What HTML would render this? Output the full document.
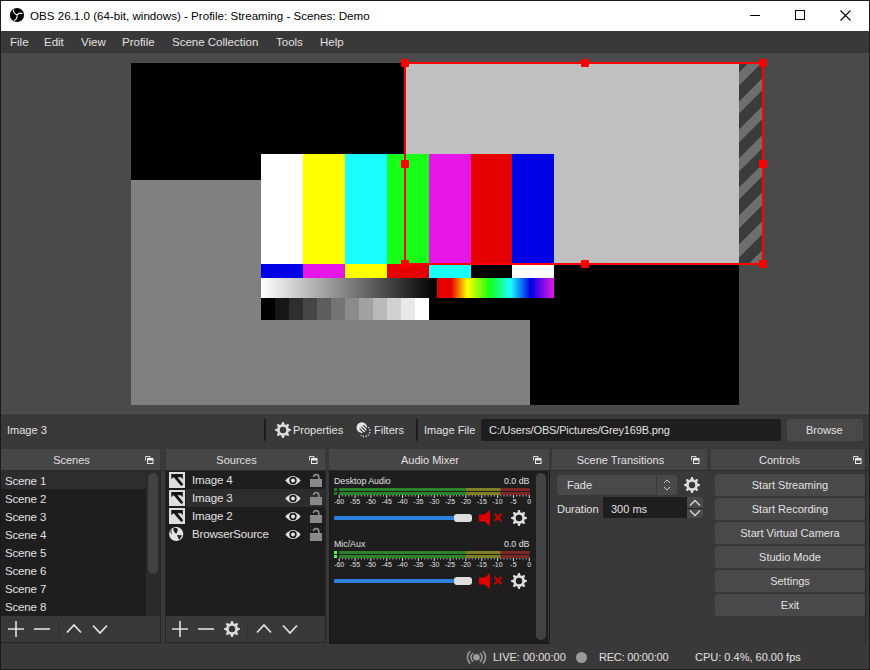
<!DOCTYPE html>
<html><head><meta charset="utf-8">
<style>
*{margin:0;padding:0;box-sizing:border-box}
html,body{width:870px;height:670px;overflow:hidden}
body{position:relative;-webkit-font-smoothing:antialiased;background:#1a1a1a;font-family:"Liberation Sans",sans-serif;font-size:11px;color:#e1e0e1}
.a{position:absolute}
.t{position:absolute;white-space:nowrap;line-height:1}
#title{left:1px;top:1px;width:868px;height:30px;background:#fff}
#menu{left:1px;top:31px;width:868px;height:22px;background:#3a393a}
#preview{left:1px;top:53px;width:868px;height:360px;background:#4a4a4a}
#ctx{left:1px;top:414px;width:868px;height:34px;background:#3a393a}
#docks{left:1px;top:448px;width:868px;height:195px;background:#3a393a}
#status{left:1px;top:643px;width:868px;height:26px;background:#3a393a}
.dtitle{position:absolute;top:449px;height:21px;background:#474647;line-height:21px;font-size:11px;color:#e1e0e1}
.dtitle span{position:absolute;left:0;right:18px;text-align:center;top:1px}
.list{position:absolute;background:#1f1e1f}
.btn{position:absolute;left:715px;width:150px;height:22px;background:#4a494a;border-radius:3px;text-align:center;line-height:22px;font-size:11px;color:#e1e0e1}
.h{position:absolute;width:8px;height:8px;background:#f00;border-radius:1px}
.li{position:absolute;white-space:nowrap;line-height:1;font-size:11.5px;letter-spacing:-0.15px}
</style></head><body>

<div id="title" class="a"></div>
<!-- OBS logo -->
<svg class="a" style="left:9px;top:7px" width="16" height="16" viewBox="0 0 16 16">
<circle cx="8" cy="8" r="7.1" fill="#000"/>
<path d="M4.3 3.0 Q4.6 6.6 8 7.8 M13.2 6.4 Q10.2 5.4 8 7.8 M8 7.8 Q8.8 11.2 5.4 13.4" stroke="#fff" stroke-width="1.1" fill="none" stroke-linecap="round"/>
</svg>
<div class="t" style="left:30px;top:10px;font-size:11.6px;color:#000">OBS 26.1.0 (64-bit, windows) - Profile: Streaming - Scenes: Demo</div>
<div class="a" style="left:750px;top:15px;width:10px;height:1px;background:#000"></div>
<div class="a" style="left:795px;top:10px;width:10px;height:10px;border:1px solid #000"></div>
<svg class="a" style="left:840px;top:10px" width="11" height="11" viewBox="0 0 11 11"><path d="M0.5 0.5L10.5 10.5M10.5 0.5L0.5 10.5" stroke="#000" stroke-width="1.1"/></svg>

<div id="menu" class="a"></div>
<div class="t" style="left:10px;top:37px;font-size:11.5px">File</div>
<div class="t" style="left:44px;top:37px;font-size:11.5px">Edit</div>
<div class="t" style="left:81px;top:37px;font-size:11.5px">View</div>
<div class="t" style="left:122px;top:37px;font-size:11.5px">Profile</div>
<div class="t" style="left:172px;top:37px;font-size:11.5px">Scene Collection</div>
<div class="t" style="left:276px;top:37px;font-size:11.5px">Tools</div>
<div class="t" style="left:320px;top:37px;font-size:11.5px">Help</div>

<div id="preview" class="a"></div>
<div class="a" style="left:131px;top:63px;width:608px;height:342px;background:#000"></div>
<div class="a" style="left:131px;top:180px;width:399px;height:225px;background:#808080"></div>
<div class="a" style="left:406px;top:64px;width:333px;height:199px;background:#c0c0c0"></div>
<div class="a" style="left:739px;top:64px;width:23px;height:199px;background:repeating-linear-gradient(-45deg,#6e6e6e 0px,#6e6e6e 9px,#3b3b3b 9px,#3b3b3b 20.3px)"></div>
<div class="a" style="left:261px;top:154px;width:293px;height:166px;background:#000">
  <div class="a" style="left:0;top:0;width:42px;height:110px;background:#fff"></div>
  <div class="a" style="left:42px;top:0;width:42px;height:110px;background:#ffff00"></div>
  <div class="a" style="left:84px;top:0;width:42px;height:110px;background:#19ffff"></div>
  <div class="a" style="left:126px;top:0;width:42px;height:110px;background:#16ff16"></div>
  <div class="a" style="left:168px;top:0;width:42px;height:110px;background:#e716e7"></div>
  <div class="a" style="left:210px;top:0;width:41px;height:110px;background:#e60000"></div>
  <div class="a" style="left:251px;top:0;width:42px;height:110px;background:#0000e6"></div>
  <div class="a" style="left:0;top:110px;width:42px;height:14px;background:#0000e6"></div>
  <div class="a" style="left:42px;top:110px;width:42px;height:14px;background:#e716e7"></div>
  <div class="a" style="left:84px;top:110px;width:42px;height:14px;background:#ffff00"></div>
  <div class="a" style="left:126px;top:110px;width:42px;height:14px;background:#e60000"></div>
  <div class="a" style="left:168px;top:110px;width:42px;height:14px;background:#19ffff"></div>
  <div class="a" style="left:210px;top:110px;width:41px;height:14px;background:#000"></div>
  <div class="a" style="left:251px;top:110px;width:42px;height:14px;background:#fff"></div>
  <div class="a" style="left:0;top:124px;width:175px;height:20px;background:linear-gradient(90deg,#fff,#000)"></div>
  <div class="a" style="left:176px;top:124px;width:117px;height:20px;background:linear-gradient(90deg,#e60000 0%,#e60000 12%,#ffff00 26%,#16ff16 45%,#19ffff 63%,#0000e6 80%,#e716e7 100%)"></div>
  <div class="a" style="left:0;top:144px;width:168px;height:22px;background:linear-gradient(90deg,#000 0 14px,#171717 14px 28px,#2e2e2e 28px 42px,#464646 42px 56px,#5d5d5d 56px 70px,#747474 70px 84px,#8b8b8b 84px 98px,#a2a2a2 98px 112px,#b9b9b9 112px 126px,#d1d1d1 126px 140px,#e8e8e8 140px 154px,#fff 154px 168px)"></div>
</div>
<div class="a" style="left:404px;top:62px;width:360px;height:203px;border:2px solid #f00"></div>
<div class="h" style="left:401px;top:59px"></div>
<div class="h" style="left:581px;top:59px"></div>
<div class="h" style="left:759px;top:59px"></div>
<div class="h" style="left:401px;top:160px"></div>
<div class="h" style="left:759px;top:160px"></div>
<div class="h" style="left:401px;top:260px"></div>
<div class="h" style="left:581px;top:260px"></div>
<div class="h" style="left:759px;top:260px"></div>

<!-- context bar -->
<div id="ctx" class="a"></div>
<div class="a" style="left:1px;top:413px;width:868px;height:1px;background:#525252"></div>
<div class="t" style="left:7px;top:425px">Image 3</div>
<div class="a" style="left:264px;top:419px;width:2px;height:22px;background:#1f1e1f"></div>
<svg class="a" style="left:275.0px;top:422.0px" width="16" height="16" viewBox="0 0 16 16"><path fill="#dcdcdc" fill-rule="evenodd" d="M13.72 6.48 L15.96 7.18 L15.96 8.82 L13.72 9.52 L13.12 10.97 L14.20 13.05 L13.05 14.20 L10.97 13.12 L9.52 13.72 L8.82 15.96 L7.18 15.96 L6.48 13.72 L5.03 13.12 L2.95 14.20 L1.80 13.05 L2.88 10.97 L2.28 9.52 L0.04 8.82 L0.04 7.18 L2.28 6.48 L2.88 5.03 L1.80 2.95 L2.95 1.80 L5.03 2.88 L6.48 2.28 L7.18 0.04 L8.82 0.04 L9.52 2.28 L10.97 2.88 L13.05 1.80 L14.20 2.95 L13.12 5.03Z M11.20 8.00 A3.2 3.2 0 1 0 4.80 8.00 A3.2 3.2 0 1 0 11.20 8.00Z"/></svg>
<div class="t" style="left:293px;top:425px">Properties</div>
<svg class="a" style="left:356px;top:422px" width="16" height="16" viewBox="0 0 16 16"><circle cx="5.8" cy="5.6" r="5.3" fill="#e6e6e6"/><path d="M7.2 3.2 L11.5 7.5 M5.4 4.9 L9.8 9.3 M3.6 6.6 L8 11" stroke="#3a393a" stroke-width="1.1"/><path d="M12.3 5.2 A5.2 5.2 0 1 1 4.8 13" fill="none" stroke="#d8d8d8" stroke-width="1.5" stroke-dasharray="1.3 1.3"/></svg>
<div class="t" style="left:374px;top:425px">Filters</div>
<div class="a" style="left:416px;top:419px;width:2px;height:22px;background:#1f1e1f"></div>
<div class="t" style="left:424px;top:425px">Image File</div>
<div class="a" style="left:481px;top:419px;width:300px;height:22px;background:#1f1e1f;border-radius:2px"></div>
<div class="t" style="left:489px;top:425px;letter-spacing:-0.15px">C:/Users/OBS/Pictures/Grey169B.png</div>
<div class="a" style="left:787px;top:419px;width:76px;height:22px;background:#4a494a;border-radius:3px"></div>
<div class="t" style="left:806px;top:425px">Browse</div>

<div id="docks" class="a"></div>
<div class="a" style="left:1px;top:470px;width:868px;height:1px;background:#2a2a2a"></div>
<div class="dtitle" style="left:1px;width:159px"><span>Scenes</span></div>
<div class="dtitle" style="left:166px;width:159px"><span>Sources</span></div>
<div class="dtitle" style="left:329px;width:220px"><span>Audio Mixer</span></div>
<div class="dtitle" style="left:552px;width:155px"><span>Scene Transitions</span></div>
<div class="dtitle" style="left:711px;width:155px"><span>Controls</span></div>
<svg class="a" style="left:145.0px;top:456px" width="9" height="8" viewBox="0 0 9 8"><path d="M0.5 4.5V0.5H5V2" fill="none" stroke="#d8d8d8" stroke-width="1"/><rect x="2.5" y="2.5" width="5.5" height="5" fill="none" stroke="#e8e8e8" stroke-width="1"/><rect x="2.5" y="2.5" width="5.5" height="2" fill="#e8e8e8"/></svg>
<svg class="a" style="left:309.0px;top:456px" width="9" height="8" viewBox="0 0 9 8"><path d="M0.5 4.5V0.5H5V2" fill="none" stroke="#d8d8d8" stroke-width="1"/><rect x="2.5" y="2.5" width="5.5" height="5" fill="none" stroke="#e8e8e8" stroke-width="1"/><rect x="2.5" y="2.5" width="5.5" height="2" fill="#e8e8e8"/></svg>
<svg class="a" style="left:533.0px;top:456px" width="9" height="8" viewBox="0 0 9 8"><path d="M0.5 4.5V0.5H5V2" fill="none" stroke="#d8d8d8" stroke-width="1"/><rect x="2.5" y="2.5" width="5.5" height="5" fill="none" stroke="#e8e8e8" stroke-width="1"/><rect x="2.5" y="2.5" width="5.5" height="2" fill="#e8e8e8"/></svg>
<svg class="a" style="left:691.0px;top:456px" width="9" height="8" viewBox="0 0 9 8"><path d="M0.5 4.5V0.5H5V2" fill="none" stroke="#d8d8d8" stroke-width="1"/><rect x="2.5" y="2.5" width="5.5" height="5" fill="none" stroke="#e8e8e8" stroke-width="1"/><rect x="2.5" y="2.5" width="5.5" height="2" fill="#e8e8e8"/></svg>
<svg class="a" style="left:853.0px;top:456px" width="9" height="8" viewBox="0 0 9 8"><path d="M0.5 4.5V0.5H5V2" fill="none" stroke="#d8d8d8" stroke-width="1"/><rect x="2.5" y="2.5" width="5.5" height="5" fill="none" stroke="#e8e8e8" stroke-width="1"/><rect x="2.5" y="2.5" width="5.5" height="2" fill="#e8e8e8"/></svg>

<!-- Scenes -->
<div class="list" style="left:1px;top:471px;width:159px;height:145px"></div>
<div class="a" style="left:1px;top:471px;width:145px;height:18px;background:#2e2d2e"></div>
<div class="a" style="left:146px;top:471px;width:14px;height:145px;background:#2c2b2c"></div>
<div class="a" style="left:148px;top:473px;width:10px;height:101px;background:#434243;border-radius:5px"></div>
<div class="li" style="left:5px;top:476px">Scene 1</div>
<div class="li" style="left:5px;top:494px">Scene 2</div>
<div class="li" style="left:5px;top:512px">Scene 3</div>
<div class="li" style="left:5px;top:530px">Scene 4</div>
<div class="li" style="left:5px;top:548px">Scene 5</div>
<div class="li" style="left:5px;top:566px">Scene 6</div>
<div class="li" style="left:5px;top:584px">Scene 7</div>
<div class="li" style="left:5px;top:602px">Scene 8</div>
<svg class="a" style="left:8.0px;top:621px" width="16" height="16" viewBox="0 0 16 16"><path d="M8 0V16M0 8H16" stroke="#e0e0e0" stroke-width="1.6"/></svg>
<svg class="a" style="left:34.0px;top:621px" width="16" height="16" viewBox="0 0 16 16"><path d="M0 8H16" stroke="#e0e0e0" stroke-width="1.6"/></svg>
<svg class="a" style="left:66.0px;top:621px" width="16" height="16" viewBox="0 0 16 16"><path d="M1 11.5L8 4L15 11.5" fill="none" stroke="#e0e0e0" stroke-width="1.8"/></svg>
<svg class="a" style="left:92.0px;top:621px" width="16" height="16" viewBox="0 0 16 16"><path d="M1 4.5L8 12L15 4.5" fill="none" stroke="#e0e0e0" stroke-width="1.8"/></svg>
<div class="a" style="left:58px;top:620px;width:1px;height:18px;background:#333233"></div>

<!-- Sources -->
<div class="list" style="left:166px;top:471px;width:159px;height:145px"></div>
<div class="a" style="left:186px;top:489px;width:139px;height:18px;background:#2e2d2e"></div>
<svg class="a" style="left:169.0px;top:472.0px" width="16" height="16" viewBox="0 0 16 16"><rect width="16" height="16" fill="#dedede"/><path d="M2.3 2H13.8V7.3L12 5.3H4.3L2.3 7.3Z" fill="#141414"/><path d="M6 4.5L12.6 12.3" stroke="#141414" stroke-width="2.8" stroke-linecap="round"/></svg>
<svg class="a" style="left:169.0px;top:490.0px" width="16" height="16" viewBox="0 0 16 16"><rect width="16" height="16" fill="#dedede"/><path d="M2.3 2H13.8V7.3L12 5.3H4.3L2.3 7.3Z" fill="#141414"/><path d="M6 4.5L12.6 12.3" stroke="#141414" stroke-width="2.8" stroke-linecap="round"/></svg>
<svg class="a" style="left:169.0px;top:508.0px" width="16" height="16" viewBox="0 0 16 16"><rect width="16" height="16" fill="#dedede"/><path d="M2.3 2H13.8V7.3L12 5.3H4.3L2.3 7.3Z" fill="#141414"/><path d="M6 4.5L12.6 12.3" stroke="#141414" stroke-width="2.8" stroke-linecap="round"/></svg>
<svg class="a" style="left:169.0px;top:527.0px" width="15" height="15" viewBox="0 0 15 15"><circle cx="7.2" cy="7" r="7.1" fill="#e2e2e2"/><path d="M4.6 0.4 C6 0.6 8.4 0.9 8.8 2.4 C9 3.8 7.8 5 7.4 6.8 C6.2 6.2 5.2 4.8 4.4 3.2 Z M8 7.9 L12.9 8.3 C12.5 10 11.2 11.6 9.9 12.7 C9.6 11 8.6 9.6 8 7.9Z" fill="#1f1e1f"/><path d="M2.6 2.6 C1.6 4 1.7 5.6 2.6 6.8" stroke="#1f1e1f" stroke-width="0.9" fill="none"/></svg>
<svg class="a" style="left:285.0px;top:475.0px" width="16" height="11" viewBox="0 0 16 11"><path d="M0.3 5.5 Q8 -3.5 15.7 5.5 Q8 14.5 0.3 5.5Z" fill="#e4e4e4"/><circle cx="8" cy="5.5" r="3.7" fill="#1f1e1f"/><circle cx="8" cy="5.5" r="2.0" fill="#e4e4e4"/></svg>
<svg class="a" style="left:285.0px;top:493.0px" width="16" height="11" viewBox="0 0 16 11"><path d="M0.3 5.5 Q8 -3.5 15.7 5.5 Q8 14.5 0.3 5.5Z" fill="#e4e4e4"/><circle cx="8" cy="5.5" r="3.7" fill="#1f1e1f"/><circle cx="8" cy="5.5" r="2.0" fill="#e4e4e4"/></svg>
<svg class="a" style="left:285.0px;top:511.0px" width="16" height="11" viewBox="0 0 16 11"><path d="M0.3 5.5 Q8 -3.5 15.7 5.5 Q8 14.5 0.3 5.5Z" fill="#e4e4e4"/><circle cx="8" cy="5.5" r="3.7" fill="#1f1e1f"/><circle cx="8" cy="5.5" r="2.0" fill="#e4e4e4"/></svg>
<svg class="a" style="left:285.0px;top:529.0px" width="16" height="11" viewBox="0 0 16 11"><path d="M0.3 5.5 Q8 -3.5 15.7 5.5 Q8 14.5 0.3 5.5Z" fill="#e4e4e4"/><circle cx="8" cy="5.5" r="3.7" fill="#1f1e1f"/><circle cx="8" cy="5.5" r="2.0" fill="#e4e4e4"/></svg>
<svg class="a" style="left:309.0px;top:473.0px" width="14" height="15" viewBox="0 0 14 15"><path d="M4.5 4 C4.5 1 9.5 0.5 9.8 4 V6.5" fill="none" stroke="#8a8a8a" stroke-width="1.7"/><rect x="1" y="6" width="12" height="8" fill="#8a8a8a"/></svg>
<svg class="a" style="left:309.0px;top:491.0px" width="14" height="15" viewBox="0 0 14 15"><path d="M4.5 4 C4.5 1 9.5 0.5 9.8 4 V6.5" fill="none" stroke="#8a8a8a" stroke-width="1.7"/><rect x="1" y="6" width="12" height="8" fill="#8a8a8a"/></svg>
<svg class="a" style="left:309.0px;top:509.0px" width="14" height="15" viewBox="0 0 14 15"><path d="M4.5 4 C4.5 1 9.5 0.5 9.8 4 V6.5" fill="none" stroke="#8a8a8a" stroke-width="1.7"/><rect x="1" y="6" width="12" height="8" fill="#8a8a8a"/></svg>
<svg class="a" style="left:309.0px;top:527.0px" width="14" height="15" viewBox="0 0 14 15"><path d="M4.5 4 C4.5 1 9.5 0.5 9.8 4 V6.5" fill="none" stroke="#8a8a8a" stroke-width="1.7"/><rect x="1" y="6" width="12" height="8" fill="#8a8a8a"/></svg>
<div class="li" style="left:192px;top:475px">Image 4</div>
<div class="li" style="left:192px;top:493px">Image 3</div>
<div class="li" style="left:192px;top:511px">Image 2</div>
<div class="li" style="left:192px;top:529px">BrowserSource</div>
<svg class="a" style="left:172.0px;top:621px" width="16" height="16" viewBox="0 0 16 16"><path d="M8 0V16M0 8H16" stroke="#e0e0e0" stroke-width="1.6"/></svg>
<svg class="a" style="left:198.0px;top:621px" width="16" height="16" viewBox="0 0 16 16"><path d="M0 8H16" stroke="#e0e0e0" stroke-width="1.6"/></svg>
<svg class="a" style="left:224.0px;top:621.0px" width="16" height="16" viewBox="0 0 16 16"><path fill="#dcdcdc" fill-rule="evenodd" d="M13.72 6.48 L15.96 7.18 L15.96 8.82 L13.72 9.52 L13.12 10.97 L14.20 13.05 L13.05 14.20 L10.97 13.12 L9.52 13.72 L8.82 15.96 L7.18 15.96 L6.48 13.72 L5.03 13.12 L2.95 14.20 L1.80 13.05 L2.88 10.97 L2.28 9.52 L0.04 8.82 L0.04 7.18 L2.28 6.48 L2.88 5.03 L1.80 2.95 L2.95 1.80 L5.03 2.88 L6.48 2.28 L7.18 0.04 L8.82 0.04 L9.52 2.28 L10.97 2.88 L13.05 1.80 L14.20 2.95 L13.12 5.03Z M11.20 8.00 A3.2 3.2 0 1 0 4.80 8.00 A3.2 3.2 0 1 0 11.20 8.00Z"/></svg>
<div class="a" style="left:247px;top:620px;width:1px;height:18px;background:#333233"></div>
<svg class="a" style="left:256.0px;top:621px" width="16" height="16" viewBox="0 0 16 16"><path d="M1 11.5L8 4L15 11.5" fill="none" stroke="#e0e0e0" stroke-width="1.8"/></svg>
<svg class="a" style="left:282.0px;top:621px" width="16" height="16" viewBox="0 0 16 16"><path d="M1 4.5L8 12L15 4.5" fill="none" stroke="#e0e0e0" stroke-width="1.8"/></svg>

<!-- Audio Mixer -->
<div class="list" style="left:330px;top:471px;width:218px;height:172px"></div>
<div class="a" style="left:536px;top:473px;width:10px;height:167px;background:#434243;border-radius:5px"></div>
<div class="t" style="left:334px;top:477px;font-size:8.8px">Desktop Audio</div>
<div class="t" style="left:504px;top:477px;font-size:8.8px">0.0 dB</div>
<svg class="a" style="left:0px;top:486px" width="560" height="20" viewBox="0 486 560 20">
<rect x="334" y="488" width="3" height="3" fill="#267f26"/>
<rect x="339.20" y="488" width="126.72" height="3" fill="#2b832b"/>
<rect x="465.92" y="488" width="34.85" height="3" fill="#7f7f26"/>
<rect x="500.77" y="488" width="29.01" height="3" fill="#7f2626"/>
<rect x="334" y="492" width="3" height="3" fill="#267f26"/>
<rect x="339.20" y="492" width="126.72" height="3" fill="#2b832b"/>
<rect x="465.92" y="492" width="34.85" height="3" fill="#7f7f26"/>
<rect x="500.77" y="492" width="29.01" height="3" fill="#7f2626"/>
<rect x="338.70" y="495" width="1" height="3" fill="#e0e0e0"/>
<rect x="341.87" y="495" width="1" height="1.5" fill="#b0b0b0"/>
<rect x="345.04" y="495" width="1" height="1.5" fill="#b0b0b0"/>
<rect x="348.20" y="495" width="1" height="1.5" fill="#b0b0b0"/>
<rect x="351.37" y="495" width="1" height="1.5" fill="#b0b0b0"/>
<rect x="354.54" y="495" width="1" height="3" fill="#e0e0e0"/>
<rect x="357.71" y="495" width="1" height="1.5" fill="#b0b0b0"/>
<rect x="360.88" y="495" width="1" height="1.5" fill="#b0b0b0"/>
<rect x="364.04" y="495" width="1" height="1.5" fill="#b0b0b0"/>
<rect x="367.21" y="495" width="1" height="1.5" fill="#b0b0b0"/>
<rect x="370.38" y="495" width="1" height="3" fill="#e0e0e0"/>
<rect x="373.55" y="495" width="1" height="1.5" fill="#b0b0b0"/>
<rect x="376.72" y="495" width="1" height="1.5" fill="#b0b0b0"/>
<rect x="379.88" y="495" width="1" height="1.5" fill="#b0b0b0"/>
<rect x="383.05" y="495" width="1" height="1.5" fill="#b0b0b0"/>
<rect x="386.22" y="495" width="1" height="3" fill="#e0e0e0"/>
<rect x="389.39" y="495" width="1" height="1.5" fill="#b0b0b0"/>
<rect x="392.56" y="495" width="1" height="1.5" fill="#b0b0b0"/>
<rect x="395.72" y="495" width="1" height="1.5" fill="#b0b0b0"/>
<rect x="398.89" y="495" width="1" height="1.5" fill="#b0b0b0"/>
<rect x="402.06" y="495" width="1" height="3" fill="#e0e0e0"/>
<rect x="405.23" y="495" width="1" height="1.5" fill="#b0b0b0"/>
<rect x="408.40" y="495" width="1" height="1.5" fill="#b0b0b0"/>
<rect x="411.56" y="495" width="1" height="1.5" fill="#b0b0b0"/>
<rect x="414.73" y="495" width="1" height="1.5" fill="#b0b0b0"/>
<rect x="417.90" y="495" width="1" height="3" fill="#e0e0e0"/>
<rect x="421.07" y="495" width="1" height="1.5" fill="#b0b0b0"/>
<rect x="424.24" y="495" width="1" height="1.5" fill="#b0b0b0"/>
<rect x="427.40" y="495" width="1" height="1.5" fill="#b0b0b0"/>
<rect x="430.57" y="495" width="1" height="1.5" fill="#b0b0b0"/>
<rect x="433.74" y="495" width="1" height="3" fill="#e0e0e0"/>
<rect x="436.91" y="495" width="1" height="1.5" fill="#b0b0b0"/>
<rect x="440.08" y="495" width="1" height="1.5" fill="#b0b0b0"/>
<rect x="443.24" y="495" width="1" height="1.5" fill="#b0b0b0"/>
<rect x="446.41" y="495" width="1" height="1.5" fill="#b0b0b0"/>
<rect x="449.58" y="495" width="1" height="3" fill="#e0e0e0"/>
<rect x="452.75" y="495" width="1" height="1.5" fill="#b0b0b0"/>
<rect x="455.92" y="495" width="1" height="1.5" fill="#b0b0b0"/>
<rect x="459.08" y="495" width="1" height="1.5" fill="#b0b0b0"/>
<rect x="462.25" y="495" width="1" height="1.5" fill="#b0b0b0"/>
<rect x="465.42" y="495" width="1" height="3" fill="#e0e0e0"/>
<rect x="468.59" y="495" width="1" height="1.5" fill="#b0b0b0"/>
<rect x="471.76" y="495" width="1" height="1.5" fill="#b0b0b0"/>
<rect x="474.92" y="495" width="1" height="1.5" fill="#b0b0b0"/>
<rect x="478.09" y="495" width="1" height="1.5" fill="#b0b0b0"/>
<rect x="481.26" y="495" width="1" height="3" fill="#e0e0e0"/>
<rect x="484.43" y="495" width="1" height="1.5" fill="#b0b0b0"/>
<rect x="487.60" y="495" width="1" height="1.5" fill="#b0b0b0"/>
<rect x="490.76" y="495" width="1" height="1.5" fill="#b0b0b0"/>
<rect x="493.93" y="495" width="1" height="1.5" fill="#b0b0b0"/>
<rect x="497.10" y="495" width="1" height="3" fill="#e0e0e0"/>
<rect x="500.27" y="495" width="1" height="1.5" fill="#b0b0b0"/>
<rect x="503.44" y="495" width="1" height="1.5" fill="#b0b0b0"/>
<rect x="506.60" y="495" width="1" height="1.5" fill="#b0b0b0"/>
<rect x="509.77" y="495" width="1" height="1.5" fill="#b0b0b0"/>
<rect x="512.94" y="495" width="1" height="3" fill="#e0e0e0"/>
<rect x="516.11" y="495" width="1" height="1.5" fill="#b0b0b0"/>
<rect x="519.28" y="495" width="1" height="1.5" fill="#b0b0b0"/>
<rect x="522.44" y="495" width="1" height="1.5" fill="#b0b0b0"/>
<rect x="525.61" y="495" width="1" height="1.5" fill="#b0b0b0"/>
<rect x="528.78" y="495" width="1" height="3" fill="#e0e0e0"/>
<text x="339.20" y="504" font-family="Liberation Sans" font-size="7" fill="#e0e0e0" text-anchor="middle">-60</text>
<text x="355.04" y="504" font-family="Liberation Sans" font-size="7" fill="#e0e0e0" text-anchor="middle">-55</text>
<text x="370.88" y="504" font-family="Liberation Sans" font-size="7" fill="#e0e0e0" text-anchor="middle">-50</text>
<text x="386.72" y="504" font-family="Liberation Sans" font-size="7" fill="#e0e0e0" text-anchor="middle">-45</text>
<text x="402.56" y="504" font-family="Liberation Sans" font-size="7" fill="#e0e0e0" text-anchor="middle">-40</text>
<text x="418.40" y="504" font-family="Liberation Sans" font-size="7" fill="#e0e0e0" text-anchor="middle">-35</text>
<text x="434.24" y="504" font-family="Liberation Sans" font-size="7" fill="#e0e0e0" text-anchor="middle">-30</text>
<text x="450.08" y="504" font-family="Liberation Sans" font-size="7" fill="#e0e0e0" text-anchor="middle">-25</text>
<text x="465.92" y="504" font-family="Liberation Sans" font-size="7" fill="#e0e0e0" text-anchor="middle">-20</text>
<text x="481.76" y="504" font-family="Liberation Sans" font-size="7" fill="#e0e0e0" text-anchor="middle">-15</text>
<text x="497.60" y="504" font-family="Liberation Sans" font-size="7" fill="#e0e0e0" text-anchor="middle">-10</text>
<text x="513.44" y="504" font-family="Liberation Sans" font-size="7" fill="#e0e0e0" text-anchor="middle">-5</text>
<text x="529.28" y="504" font-family="Liberation Sans" font-size="7" fill="#e0e0e0" text-anchor="middle">0</text>
</svg>
<div class="a" style="left:334px;top:516px;width:122px;height:4px;background:#2a82da;border-radius:1px"></div>
<div class="a" style="left:454px;top:514px;width:18px;height:8px;background:#dedede;border-radius:3px"></div>
<svg class="a" style="left:478px;top:509px" width="26" height="18" viewBox="0 0 26 18"><path d="M1 5.5H6.5L12 1V17L6.5 12.5H1Z" fill="#e00000"/><path d="M16.5 5L23.5 12M23.5 5L16.5 12" stroke="#c80000" stroke-width="2.2"/></svg>
<svg class="a" style="left:511px;top:510px" width="16" height="16" viewBox="0 0 16 16"><path fill="#dcdcdc" fill-rule="evenodd" d="M13.72 6.48 L15.96 7.18 L15.96 8.82 L13.72 9.52 L13.12 10.97 L14.20 13.05 L13.05 14.20 L10.97 13.12 L9.52 13.72 L8.82 15.96 L7.18 15.96 L6.48 13.72 L5.03 13.12 L2.95 14.20 L1.80 13.05 L2.88 10.97 L2.28 9.52 L0.04 8.82 L0.04 7.18 L2.28 6.48 L2.88 5.03 L1.80 2.95 L2.95 1.80 L5.03 2.88 L6.48 2.28 L7.18 0.04 L8.82 0.04 L9.52 2.28 L10.97 2.88 L13.05 1.80 L14.20 2.95 L13.12 5.03Z M11.20 8.00 A3.2 3.2 0 1 0 4.80 8.00 A3.2 3.2 0 1 0 11.20 8.00Z"/></svg>
<div class="t" style="left:334px;top:540px;font-size:8.8px">Mic/Aux</div>
<div class="t" style="left:504px;top:540px;font-size:8.8px">0.0 dB</div>
<svg class="a" style="left:0px;top:549px" width="560" height="20" viewBox="0 549 560 20">
<rect x="334" y="551" width="3" height="3" fill="#4cff4c"/>
<rect x="339.20" y="551" width="126.72" height="3" fill="#2b832b"/>
<rect x="465.92" y="551" width="34.85" height="3" fill="#7f7f26"/>
<rect x="500.77" y="551" width="29.01" height="3" fill="#7f2626"/>
<rect x="334" y="555" width="3" height="3" fill="#4cff4c"/>
<rect x="339.20" y="555" width="126.72" height="3" fill="#2b832b"/>
<rect x="465.92" y="555" width="34.85" height="3" fill="#7f7f26"/>
<rect x="500.77" y="555" width="29.01" height="3" fill="#7f2626"/>
<rect x="338.70" y="558" width="1" height="3" fill="#e0e0e0"/>
<rect x="341.87" y="558" width="1" height="1.5" fill="#b0b0b0"/>
<rect x="345.04" y="558" width="1" height="1.5" fill="#b0b0b0"/>
<rect x="348.20" y="558" width="1" height="1.5" fill="#b0b0b0"/>
<rect x="351.37" y="558" width="1" height="1.5" fill="#b0b0b0"/>
<rect x="354.54" y="558" width="1" height="3" fill="#e0e0e0"/>
<rect x="357.71" y="558" width="1" height="1.5" fill="#b0b0b0"/>
<rect x="360.88" y="558" width="1" height="1.5" fill="#b0b0b0"/>
<rect x="364.04" y="558" width="1" height="1.5" fill="#b0b0b0"/>
<rect x="367.21" y="558" width="1" height="1.5" fill="#b0b0b0"/>
<rect x="370.38" y="558" width="1" height="3" fill="#e0e0e0"/>
<rect x="373.55" y="558" width="1" height="1.5" fill="#b0b0b0"/>
<rect x="376.72" y="558" width="1" height="1.5" fill="#b0b0b0"/>
<rect x="379.88" y="558" width="1" height="1.5" fill="#b0b0b0"/>
<rect x="383.05" y="558" width="1" height="1.5" fill="#b0b0b0"/>
<rect x="386.22" y="558" width="1" height="3" fill="#e0e0e0"/>
<rect x="389.39" y="558" width="1" height="1.5" fill="#b0b0b0"/>
<rect x="392.56" y="558" width="1" height="1.5" fill="#b0b0b0"/>
<rect x="395.72" y="558" width="1" height="1.5" fill="#b0b0b0"/>
<rect x="398.89" y="558" width="1" height="1.5" fill="#b0b0b0"/>
<rect x="402.06" y="558" width="1" height="3" fill="#e0e0e0"/>
<rect x="405.23" y="558" width="1" height="1.5" fill="#b0b0b0"/>
<rect x="408.40" y="558" width="1" height="1.5" fill="#b0b0b0"/>
<rect x="411.56" y="558" width="1" height="1.5" fill="#b0b0b0"/>
<rect x="414.73" y="558" width="1" height="1.5" fill="#b0b0b0"/>
<rect x="417.90" y="558" width="1" height="3" fill="#e0e0e0"/>
<rect x="421.07" y="558" width="1" height="1.5" fill="#b0b0b0"/>
<rect x="424.24" y="558" width="1" height="1.5" fill="#b0b0b0"/>
<rect x="427.40" y="558" width="1" height="1.5" fill="#b0b0b0"/>
<rect x="430.57" y="558" width="1" height="1.5" fill="#b0b0b0"/>
<rect x="433.74" y="558" width="1" height="3" fill="#e0e0e0"/>
<rect x="436.91" y="558" width="1" height="1.5" fill="#b0b0b0"/>
<rect x="440.08" y="558" width="1" height="1.5" fill="#b0b0b0"/>
<rect x="443.24" y="558" width="1" height="1.5" fill="#b0b0b0"/>
<rect x="446.41" y="558" width="1" height="1.5" fill="#b0b0b0"/>
<rect x="449.58" y="558" width="1" height="3" fill="#e0e0e0"/>
<rect x="452.75" y="558" width="1" height="1.5" fill="#b0b0b0"/>
<rect x="455.92" y="558" width="1" height="1.5" fill="#b0b0b0"/>
<rect x="459.08" y="558" width="1" height="1.5" fill="#b0b0b0"/>
<rect x="462.25" y="558" width="1" height="1.5" fill="#b0b0b0"/>
<rect x="465.42" y="558" width="1" height="3" fill="#e0e0e0"/>
<rect x="468.59" y="558" width="1" height="1.5" fill="#b0b0b0"/>
<rect x="471.76" y="558" width="1" height="1.5" fill="#b0b0b0"/>
<rect x="474.92" y="558" width="1" height="1.5" fill="#b0b0b0"/>
<rect x="478.09" y="558" width="1" height="1.5" fill="#b0b0b0"/>
<rect x="481.26" y="558" width="1" height="3" fill="#e0e0e0"/>
<rect x="484.43" y="558" width="1" height="1.5" fill="#b0b0b0"/>
<rect x="487.60" y="558" width="1" height="1.5" fill="#b0b0b0"/>
<rect x="490.76" y="558" width="1" height="1.5" fill="#b0b0b0"/>
<rect x="493.93" y="558" width="1" height="1.5" fill="#b0b0b0"/>
<rect x="497.10" y="558" width="1" height="3" fill="#e0e0e0"/>
<rect x="500.27" y="558" width="1" height="1.5" fill="#b0b0b0"/>
<rect x="503.44" y="558" width="1" height="1.5" fill="#b0b0b0"/>
<rect x="506.60" y="558" width="1" height="1.5" fill="#b0b0b0"/>
<rect x="509.77" y="558" width="1" height="1.5" fill="#b0b0b0"/>
<rect x="512.94" y="558" width="1" height="3" fill="#e0e0e0"/>
<rect x="516.11" y="558" width="1" height="1.5" fill="#b0b0b0"/>
<rect x="519.28" y="558" width="1" height="1.5" fill="#b0b0b0"/>
<rect x="522.44" y="558" width="1" height="1.5" fill="#b0b0b0"/>
<rect x="525.61" y="558" width="1" height="1.5" fill="#b0b0b0"/>
<rect x="528.78" y="558" width="1" height="3" fill="#e0e0e0"/>
<text x="339.20" y="567" font-family="Liberation Sans" font-size="7" fill="#e0e0e0" text-anchor="middle">-60</text>
<text x="355.04" y="567" font-family="Liberation Sans" font-size="7" fill="#e0e0e0" text-anchor="middle">-55</text>
<text x="370.88" y="567" font-family="Liberation Sans" font-size="7" fill="#e0e0e0" text-anchor="middle">-50</text>
<text x="386.72" y="567" font-family="Liberation Sans" font-size="7" fill="#e0e0e0" text-anchor="middle">-45</text>
<text x="402.56" y="567" font-family="Liberation Sans" font-size="7" fill="#e0e0e0" text-anchor="middle">-40</text>
<text x="418.40" y="567" font-family="Liberation Sans" font-size="7" fill="#e0e0e0" text-anchor="middle">-35</text>
<text x="434.24" y="567" font-family="Liberation Sans" font-size="7" fill="#e0e0e0" text-anchor="middle">-30</text>
<text x="450.08" y="567" font-family="Liberation Sans" font-size="7" fill="#e0e0e0" text-anchor="middle">-25</text>
<text x="465.92" y="567" font-family="Liberation Sans" font-size="7" fill="#e0e0e0" text-anchor="middle">-20</text>
<text x="481.76" y="567" font-family="Liberation Sans" font-size="7" fill="#e0e0e0" text-anchor="middle">-15</text>
<text x="497.60" y="567" font-family="Liberation Sans" font-size="7" fill="#e0e0e0" text-anchor="middle">-10</text>
<text x="513.44" y="567" font-family="Liberation Sans" font-size="7" fill="#e0e0e0" text-anchor="middle">-5</text>
<text x="529.28" y="567" font-family="Liberation Sans" font-size="7" fill="#e0e0e0" text-anchor="middle">0</text>
</svg>
<div class="a" style="left:334px;top:579px;width:122px;height:4px;background:#2a82da;border-radius:1px"></div>
<div class="a" style="left:454px;top:577px;width:18px;height:8px;background:#dedede;border-radius:3px"></div>
<svg class="a" style="left:478px;top:572px" width="26" height="18" viewBox="0 0 26 18"><path d="M1 5.5H6.5L12 1V17L6.5 12.5H1Z" fill="#e00000"/><path d="M16.5 5L23.5 12M23.5 5L16.5 12" stroke="#c80000" stroke-width="2.2"/></svg>
<svg class="a" style="left:511px;top:573px" width="16" height="16" viewBox="0 0 16 16"><path fill="#dcdcdc" fill-rule="evenodd" d="M13.72 6.48 L15.96 7.18 L15.96 8.82 L13.72 9.52 L13.12 10.97 L14.20 13.05 L13.05 14.20 L10.97 13.12 L9.52 13.72 L8.82 15.96 L7.18 15.96 L6.48 13.72 L5.03 13.12 L2.95 14.20 L1.80 13.05 L2.88 10.97 L2.28 9.52 L0.04 8.82 L0.04 7.18 L2.28 6.48 L2.88 5.03 L1.80 2.95 L2.95 1.80 L5.03 2.88 L6.48 2.28 L7.18 0.04 L8.82 0.04 L9.52 2.28 L10.97 2.88 L13.05 1.80 L14.20 2.95 L13.12 5.03Z M11.20 8.00 A3.2 3.2 0 1 0 4.80 8.00 A3.2 3.2 0 1 0 11.20 8.00Z"/></svg>

<!-- Scene transitions -->
<div class="a" style="left:557px;top:475px;width:120px;height:20px;background:#4a494a;border-radius:3px"></div>
<div class="a" style="left:656px;top:476px;width:1px;height:18px;background:#3a393a"></div>
<svg class="a" style="left:662px;top:478px" width="10" height="14" viewBox="0 0 10 14"><path d="M2 5 L5 2 L8 5 M2 9 L5 12 L8 9" stroke="#c8c8c8" stroke-width="1" fill="none"/></svg>
<div class="t" style="left:567px;top:480px">Fade</div>
<svg class="a" style="left:684.0px;top:477.0px" width="16" height="16" viewBox="0 0 16 16"><path fill="#dcdcdc" fill-rule="evenodd" d="M13.72 6.48 L15.96 7.18 L15.96 8.82 L13.72 9.52 L13.12 10.97 L14.20 13.05 L13.05 14.20 L10.97 13.12 L9.52 13.72 L8.82 15.96 L7.18 15.96 L6.48 13.72 L5.03 13.12 L2.95 14.20 L1.80 13.05 L2.88 10.97 L2.28 9.52 L0.04 8.82 L0.04 7.18 L2.28 6.48 L2.88 5.03 L1.80 2.95 L2.95 1.80 L5.03 2.88 L6.48 2.28 L7.18 0.04 L8.82 0.04 L9.52 2.28 L10.97 2.88 L13.05 1.80 L14.20 2.95 L13.12 5.03Z M11.20 8.00 A3.2 3.2 0 1 0 4.80 8.00 A3.2 3.2 0 1 0 11.20 8.00Z"/></svg>
<div class="t" style="left:557px;top:504px">Duration</div>
<div class="a" style="left:603px;top:497px;width:84px;height:21px;background:#1f1e1f"></div>
<div class="a" style="left:687px;top:497px;width:16px;height:21px;background:#4a494a;border-radius:0 3px 3px 0"></div>
<svg class="a" style="left:687px;top:497px" width="16" height="21" viewBox="0 0 16 21"><path d="M3 8.5 L8 3.5 L13 8.5 M3 13.5 L8 18.5 L13 13.5" stroke="#d4d4d4" stroke-width="1.4" fill="none"/><rect x="0" y="11" width="16" height="1" fill="#262626"/></svg>
<div class="t" style="left:611px;top:504px">300 ms</div>

<!-- Controls -->
<div class="btn" style="top:474px">Start Streaming</div>
<div class="btn" style="top:498px">Start Recording</div>
<div class="btn" style="top:522px">Start Virtual Camera</div>
<div class="btn" style="top:546px">Studio Mode</div>
<div class="btn" style="top:570px">Settings</div>
<div class="btn" style="top:594px">Exit</div>

<div class="a" style="left:160px;top:470px;width:1px;height:173px;background:#262626"></div>
<div class="a" style="left:165px;top:470px;width:1px;height:173px;background:#262626"></div>
<div class="a" style="left:325px;top:470px;width:1px;height:173px;background:#262626"></div>
<div class="a" style="left:329px;top:470px;width:1px;height:174px;background:#181818"></div>
<div class="a" style="left:549px;top:470px;width:1px;height:174px;background:#181818"></div>
<div class="a" style="left:865px;top:449px;width:1px;height:194px;background:#2a2a2a"></div>
<!-- status -->
<div id="status" class="a"></div>
<div class="a" style="left:1px;top:642px;width:160px;height:1px;background:#262626"></div>
<div class="a" style="left:165px;top:642px;width:161px;height:1px;background:#262626"></div>
<div class="a" style="left:329px;top:643px;width:221px;height:1px;background:#181818"></div>
<svg class="a" style="left:466px;top:650px" width="21" height="15" viewBox="0 0 21 15"><circle cx="10.5" cy="7.3" r="3.3" fill="#9c9c9c"/><g fill="none" stroke="#9c9c9c" stroke-width="1.5"><path d="M7 3 A5.5 5.5 0 0 0 7 11.6"/><path d="M14 3 A5.5 5.5 0 0 1 14 11.6"/><path d="M4.2 1 A8.5 8.5 0 0 0 4.2 13.6"/><path d="M16.8 1 A8.5 8.5 0 0 1 16.8 13.6"/></g></svg>
<div class="t" style="left:493px;top:652px">LIVE: 00:00:00</div>
<div class="a" style="left:576px;top:652px;width:11px;height:11px;border-radius:50%;background:#9a9a9a"></div>
<div class="t" style="left:599px;top:652px;letter-spacing:-0.22px">REC: 00:00:00</div>
<div class="t" style="left:695px;top:652px">CPU: 0.4%, 60.00 fps</div>

</body></html>
